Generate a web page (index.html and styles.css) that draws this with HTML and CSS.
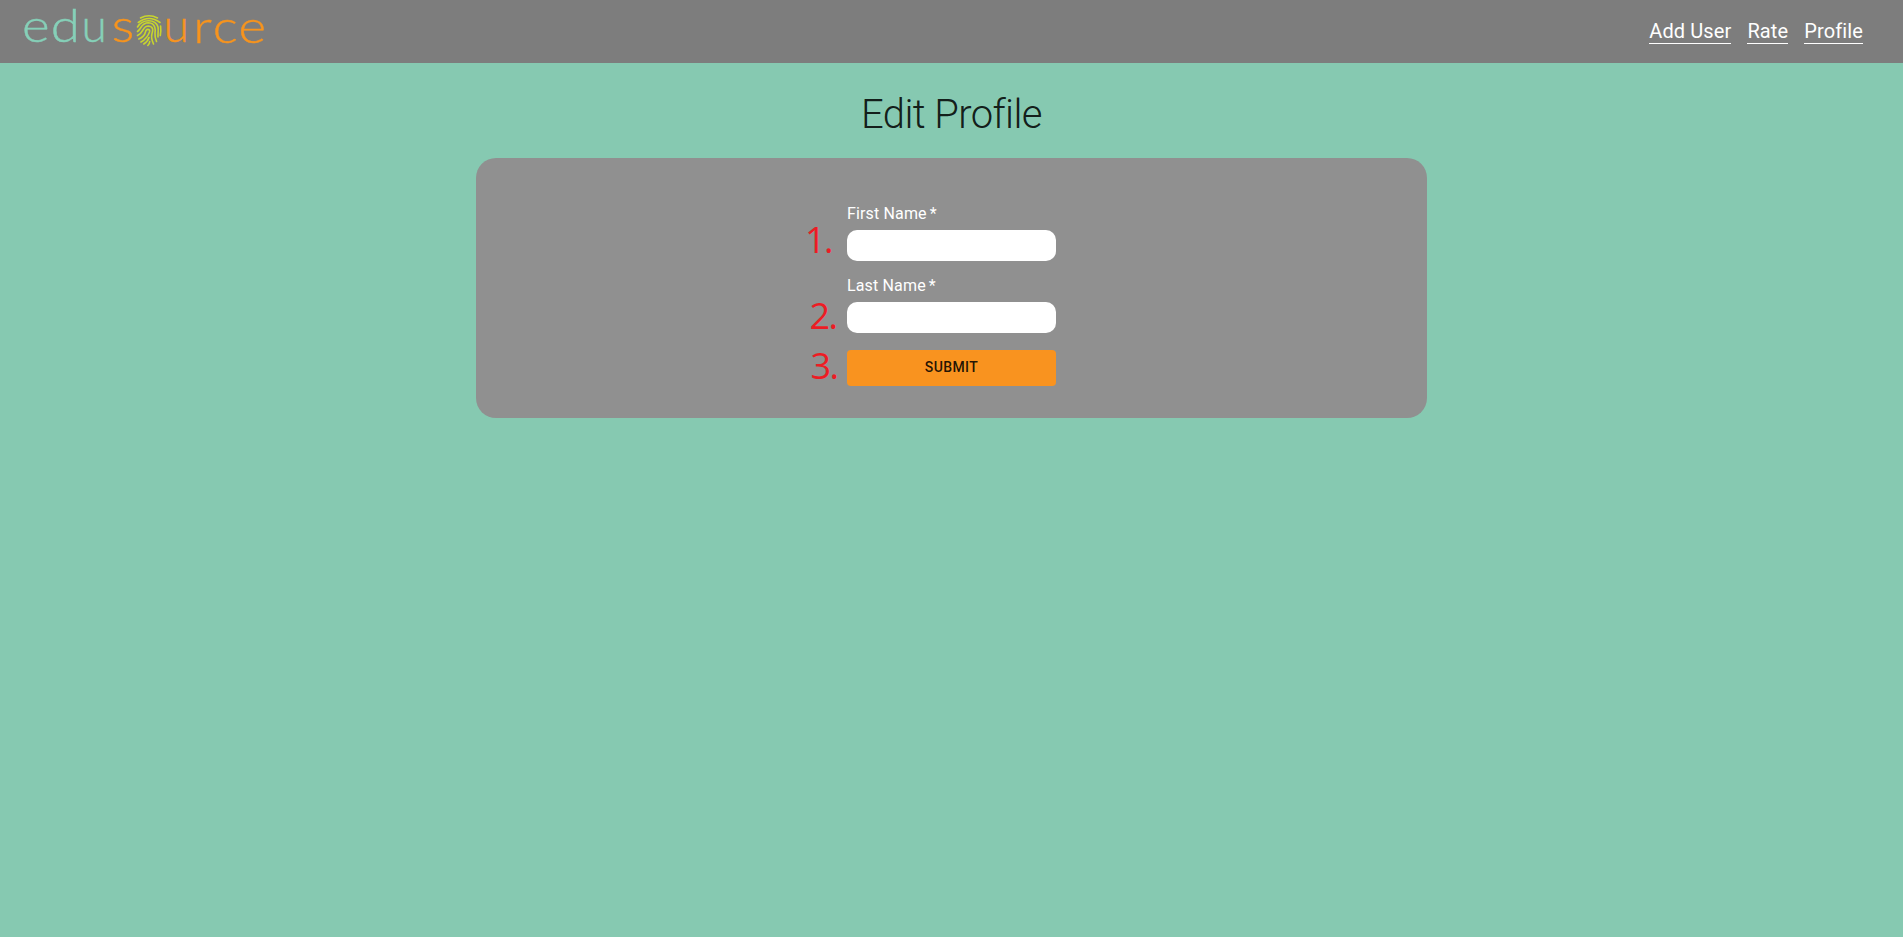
FILE: index.html
```html
<!DOCTYPE html>
<html lang="en">
<head>
<meta charset="utf-8">
<title>Edit Profile</title>
<link rel="stylesheet" href="styles.css">
</head>
<body>
<header class="topbar">
  <svg class="logo" width="290" height="63" viewBox="0 0 290 63" role="img" aria-label="edusource">
    <text class="logo-text logo-edu" y="41.700" transform="scale(1.15 1)" x="19.2 44.2">ed</text>
    <text class="logo-text logo-edu" y="41.700" x="81.500">u</text>
    <text class="logo-text logo-source" y="42.300" transform="scale(1.15 1)" x="97.200">s</text>
    <text class="logo-text logo-source" y="42.300" x="163.500">u</text>
    <text class="logo-text logo-source" y="42.600" transform="scale(1.15 1)" x="168 184.900 207.400">rce</text>
    <g class="print">
      <path d="M140.500 18Q149 13.500 157.500 18"/>
      <path d="M138.300 22.500Q149 14.500 160 22.500"/>
      <path d="M137.500 27C142.500 18.700 155.500 18.700 158 27C158.700 31 157.700 33 158 37"/>
      <path d="M160.600 26Q161.200 31 160.300 35.500"/>
      <path d="M137.500 31.500C141.500 29 141 22.800 148.500 22.800C155.800 23.300 155.500 30 155 33C154.700 36 155.500 39 156.500 41.500"/>
      <path d="M137.500 35.500C144.500 32.500 142 26 148.500 26C154 26.500 153 31 151.800 34.500C151 38 152.200 41 153.500 44"/>
      <path d="M138.800 39C146 36 145 32 146 30.500C147.500 28.500 150.300 29.500 149.500 32C147.500 37.500 145.500 39.500 141 42"/>
      <path d="M143.800 44C147 42 148.300 40 149 37.500"/>
      <path d="M147.800 45.500Q149.700 43.500 149.700 41.500"/>
    </g>
  </svg>
  <nav class="nav">
    <a class="nav-link">Add User</a>
    <a class="nav-link">Rate</a>
    <a class="nav-link">Profile</a>
  </nav>
</header>
<main class="page">
  <h1 class="title">Edit Profile</h1>
  <section class="card">
    <form class="form">
      <div class="field">
        <label class="label" for="first">First Name<span class="req">*</span></label>
        <input class="input" id="first" type="text">
        <span class="step step-first">1.</span>
      </div>
      <div class="field">
        <label class="label" for="last">Last Name<span class="req">*</span></label>
        <input class="input" id="last" type="text">
        <span class="step step-last">2.</span>
      </div>
      <div class="actions">
        <button class="submit" type="button">SUBMIT</button>
        <span class="step step-submit">3.</span>
      </div>
    </form>
  </section>
</main>
</body>
</html>
```
FILE: styles.css
```css
* { box-sizing: border-box; }
body {
  margin: 0;
  min-height: 100vh;
  background: #86c9b1;
  font-family: Roboto, "Liberation Sans", sans-serif;
}
.topbar {
  display: flex;
  justify-content: space-between;
  height: 63px;
  padding-right: 40px;
  background: #7d7d7d;
}
.logo {
  display: block;
  overflow: visible;
}
.logo-text {
  font-family: Lato, sans-serif;
  font-weight: 300;
  font-size: 46px;
  stroke-width: 0.4px;
}
.logo-edu { fill: #86d0b8; stroke: #86d0b8; }
.logo-source { fill: #f7941e; stroke: #f7941e; }
.print {
  fill: none;
  stroke: #c8d52e;
  stroke-width: 1.6;
  stroke-linecap: round;
}
.nav {
  display: flex;
  gap: 16px;
  align-items: flex-start;
  padding-top: 19px;
}
.nav-link {
  color: #fff;
  font-size: 20px;
  line-height: 24px;
  letter-spacing: 0.12px;
  border-bottom: 1px solid #fff;
}
.page {
  display: flex;
  flex-direction: column;
  align-items: center;
}
.title {
  margin: 28px 0 20px;
  font-size: 40px;
  font-weight: 300;
  line-height: 47px;
  letter-spacing: -0.625px;
  color: rgba(0, 0, 0, 0.87);
}
.card {
  display: flex;
  justify-content: center;
  width: 50%;
  height: 260px;
  padding-top: 44px;
  border-radius: 20px;
  background: #909090;
}
.form { width: 209px; }
.field {
  position: relative;
  display: flex;
  flex-direction: column;
  height: 72px;
}
.label {
  color: #fff;
  font-size: 16px;
  line-height: 23px;
  letter-spacing: 0.15px;
  margin-bottom: 5px;
}
.req { margin-left: 3px; }
.input {
  width: 209px;
  height: 31px;
  padding: 0 8px;
  border: 0;
  border-radius: 10px;
  background: #fff;
}
.actions {
  position: relative;
  padding-top: 4px;
}
.submit {
  display: block;
  width: 209px;
  height: 36px;
  padding: 0 0 2px;
  border: 0;
  border-radius: 4px;
  background: #f9931f;
  color: rgba(0, 0, 0, 0.87);
  font-family: inherit;
  font-size: 14px;
  font-weight: 500;
  letter-spacing: 0.4px;
}
.step {
  position: absolute;
  color: #ed1c24;
  font-family: "Open Sans", "Noto Sans", sans-serif;
  font-size: 36px;
  line-height: 40px;
  letter-spacing: -1.5px;
}
.step-first { left: -42px; top: 18px; }
.step-last { left: -37.5px; top: 22px; }
.step-submit { left: -36.5px; top: 0; }
```
